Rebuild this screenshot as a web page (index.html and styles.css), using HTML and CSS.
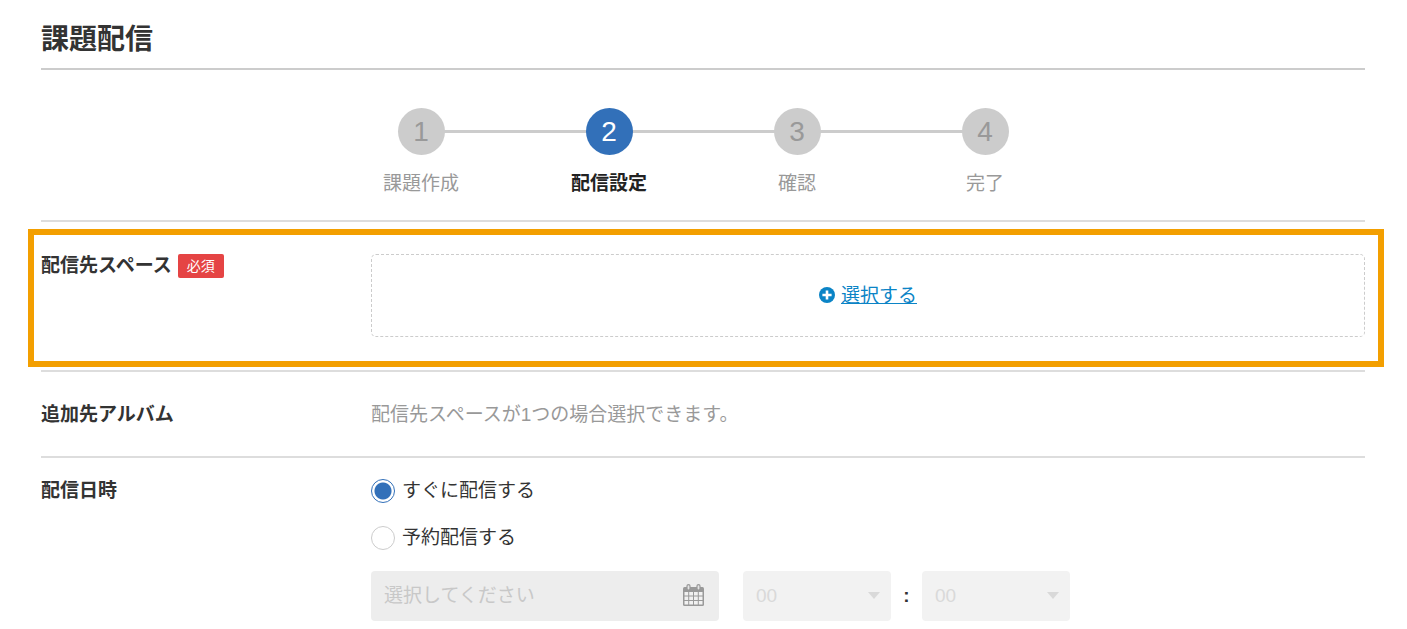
FILE: index.html
```
<!DOCTYPE html>
<html lang="ja">
<head>
<meta charset="utf-8">
<meta name="viewport" content="width=device-width, initial-scale=1">
<title>課題配信</title>
<link rel="stylesheet" href="styles.css">
</head>
<body>
<main class="page">
  <h1 class="title">課題配信</h1>
  <ol class="steps">
    <li class="step"><span class="step-number">1</span><span class="step-label">課題作成</span></li>
    <li class="step step-current" aria-current="step"><span class="step-number">2</span><span class="step-label">配信設定</span></li>
    <li class="step"><span class="step-number">3</span><span class="step-label">確認</span></li>
    <li class="step"><span class="step-number">4</span><span class="step-label">完了</span></li>
  </ol>
  <form class="form">
    <section class="row row-space">
      <h2 class="label">配信先スペース<span class="badge">必須</span></h2>
      <div class="dropzone">
        <svg class="plus" viewBox="0 0 16 18" aria-hidden="true"><circle cx="8" cy="8" r="8" fill="#0b84c6"/><path d="M8 3.400v9.200M3.400 8h9.200" stroke="#fff" stroke-width="2.600"/></svg>
        <a class="select-link" href="#">選択する</a>
      </div>
    </section>
    <section class="row row-album">
      <h2 class="label">追加先アルバム</h2>
      <p class="note">配信先スペースが1つの場合選択できます。</p>
    </section>
    <section class="row row-date">
      <h2 class="label">配信日時</h2>
      <div class="options">
        <label class="option"><input class="radio" type="radio" name="timing" checked>すぐに配信する</label>
        <label class="option"><input class="radio" type="radio" name="timing">予約配信する</label>
        <div class="schedule">
          <div class="date">
            <input class="date-input" type="text" placeholder="選択してください" aria-label="配信日" disabled>
            <svg class="calendar" viewBox="0 0 21 22" aria-hidden="true"><rect y="3" width="21" height="19" rx="1.500" fill="#999"/><g fill="#f1f1f1"><path d="M1.500 8h3.700v3.500H1.500zM6.200 8h3.800v3.500H6.200zM11 8h3.800v3.500H11zM15.800 8h3.700v3.500h-3.700z"/><path d="M1.500 12.500h3.700v3.500H1.500zM6.200 12.500h3.800v3.500H6.200zM11 12.500h3.800v3.500H11zM15.800 12.500h3.700v3.500h-3.700z"/><path d="M1.500 17h3.700v3.500H1.500zM6.200 17h3.800v3.500H6.200zM11 17h3.800v3.500H11zM15.800 17h3.700v3.500h-3.700z"/></g><g fill="#e4e4e4" stroke="#999" stroke-width="1.200"><rect x="4" y="0.600" width="3" height="5.400" rx="1.500"/><rect x="14" y="0.600" width="3" height="5.400" rx="1.500"/></g></svg>
          </div>
          <div class="time">
            <div class="picker"><select class="picker-select" aria-label="時" disabled><option>00</option></select><svg class="caret" viewBox="0 0 12 7" aria-hidden="true"><path d="M0 0h12L6 7z" fill="#d9d9d9"/></svg></div>
            <span class="colon">:</span>
            <div class="picker"><select class="picker-select" aria-label="分" disabled><option>00</option></select><svg class="caret" viewBox="0 0 12 7" aria-hidden="true"><path d="M0 0h12L6 7z" fill="#d9d9d9"/></svg></div>
          </div>
        </div>
      </div>
    </section>
  </form>
</main>
</body>
</html>
```
FILE: styles.css
```
* {
  box-sizing: border-box;
}

body {
  margin: 0;
  background: #fff;
  color: #333;
  font: 19px/28px "Liberation Sans", "Noto Sans CJK JP", sans-serif;
}

.page {
  padding: 22px 42px 8px 41px;
}

.title {
  margin: 0;
  padding-bottom: 10px;
  border-bottom: 2px solid #ccc;
  font-size: 28px;
  line-height: 36px;
}

.steps {
  display: flex;
  justify-content: center;
  margin: 0;
  padding: 38px 0 22px;
  list-style: none;
}

.step {
  position: relative;
  display: flex;
  flex-direction: column;
  align-items: center;
  gap: 15px;
  width: 188px;
  color: #999;
}

.step + .step::before {
  content: "";
  position: absolute;
  top: 22px;
  right: 50%;
  width: 100%;
  height: 3px;
  background: #ccc;
}

.step-number {
  z-index: 1;
  width: 47px;
  height: 47px;
  border-radius: 50%;
  background: #ccc;
  font-size: 28px;
  line-height: 47px;
  text-align: center;
}

.step-current {
  color: #222;
  font-weight: bold;
}

.step-current .step-number {
  background: #3270b9;
  color: #fff;
  font-weight: normal;
}

.row {
  position: relative;
  display: grid;
  grid-template-columns: 330px 1fr;
  align-items: start;
  border-top: 2px solid #ddd;
}

.row-space {
  padding: 30px 0 33px;
}

.row-space::after {
  content: "";
  position: absolute;
  inset: 7px -19px 3px -13px;
  border: 6px solid #f39f00;
  pointer-events: none;
}

.row-album {
  padding: 29px 0 27px;
}

.row-date {
  padding-top: 19px;
}

.label {
  display: flex;
  align-items: center;
  gap: 6px;
  margin: 0;
  font-size: 19px;
  line-height: 28px;
}

.badge {
  padding: 0 9px;
  border-radius: 2px;
  background: #e54444;
  color: #fff;
  font-size: 14px;
  font-weight: normal;
  line-height: 24px;
}

.dropzone {
  display: flex;
  align-items: center;
  justify-content: center;
  gap: 6px;
  height: 83px;
  margin-top: 2px;
  border: 1px dashed #ccc;
  border-radius: 5px;
}

.plus {
  width: 16px;
  height: 18px;
}

.select-link {
  color: #0b84c6;
}

.note {
  margin: 0;
  color: #999;
}

.options {
  display: grid;
  gap: 19px;
}

.option {
  display: flex;
  align-items: center;
  justify-self: start;
  gap: 7px;
}

.radio {
  appearance: none;
  width: 24px;
  height: 24px;
  margin: 0;
  border: 1px solid #ccc;
  border-radius: 50%;
  background: #fff;
}

.radio:checked {
  border-color: #3270b9;
  background: radial-gradient(circle, #3270b9 8px, #fff 9px);
}

.schedule {
  display: flex;
  gap: 24px;
}

.date {
  position: relative;
  width: 348px;
}

.date-input,
.picker-select {
  appearance: none;
  display: block;
  width: 100%;
  height: 50px;
  padding: 0 13px;
  border: 0;
  border-radius: 4px;
  font: inherit;
}

.date-input {
  padding-right: 48px;
  background: #ededed;
}

.date-input::placeholder {
  color: #c8c8c8;
}

.calendar {
  position: absolute;
  top: 13px;
  right: 15px;
  width: 21px;
  height: 22px;
}

.time {
  display: flex;
  align-items: center;
}

.picker {
  position: relative;
  width: 148px;
}

.picker-select {
  background: #f2f2f2;
  color: #d9d9d9;
  opacity: 1;
}

.caret {
  position: absolute;
  top: 21px;
  right: 11px;
  width: 12px;
  height: 7px;
}

.colon {
  width: 31px;
  font-weight: bold;
  text-align: center;
}
```
